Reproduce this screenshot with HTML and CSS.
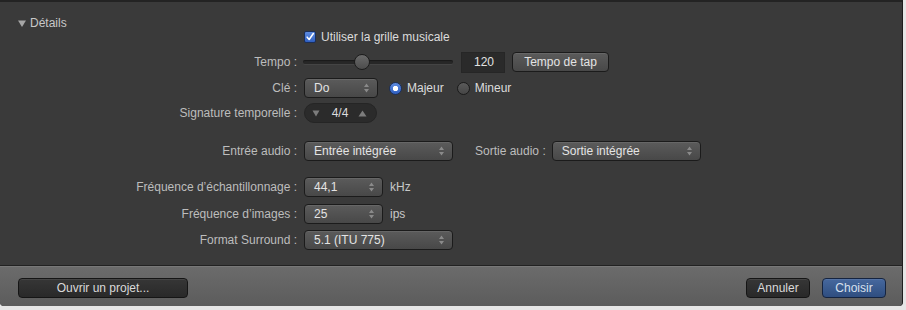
FILE: index.html
```html
<!DOCTYPE html>
<html lang="fr">
<head>
<meta charset="utf-8">
<title>Détails</title>
<link rel="stylesheet" href="styles.css">
</head>
<body>
<div class="window">
  <div class="content">
    <div class="disclosure"><svg class="tri" width="8" height="7" viewBox="0 0 8 7"><path d="M0 0.5 L8 0.5 L4 7 Z" fill="#a6a6a6"/></svg>Détails</div>

    <div class="row row-check">
      <span class="lbl"></span>
      <span class="checkbox"><svg width="12" height="12" viewBox="0 0 12 12"><path d="M2.6 6.2 L5 9 L10 1.8" fill="none" stroke="#fff" stroke-width="1.8" stroke-linecap="round" stroke-linejoin="round"/></svg></span>
      <span class="ctext">Utiliser la grille musicale</span>
    </div>

    <div class="row row-tempo">
      <span class="lbl">Tempo :</span>
      <span class="slider"><span class="track"></span><span class="knob"></span></span>
      <span class="numfield">120</span>
      <span class="button btn-tap">Tempo de tap</span>
    </div>

    <div class="row">
      <span class="lbl">Clé :</span>
      <span class="popup w74">Do<svg class="arr" width="7" height="10" viewBox="0 0 7 10"><path d="M3.5 0.5 L6 4 L1 4 Z M3.5 9.5 L6 6 L1 6 Z" fill="#8a8a8a"/></svg></span>
      <span class="radio on"></span><span class="ctext rl">Majeur</span>
      <span class="radio off"></span><span class="ctext rl">Mineur</span>
    </div>

    <div class="row row-sig">
      <span class="lbl">Signature temporelle :</span>
      <span class="stepper">
        <svg width="8" height="7" viewBox="0 0 8 7"><path d="M0.5 0.5 L7.5 0.5 L4 6.5 Z" fill="#7c7c7c"/></svg>
        <span class="stext">4/4</span>
        <svg width="9" height="7" viewBox="0 0 9 7"><path d="M0.5 6.5 L8.5 6.5 L4.5 0.5 Z" fill="#7c7c7c"/></svg>
      </span>
    </div>

    <div class="row row-audio">
      <span class="lbl">Entrée audio :</span>
      <span class="popup w149">Entrée intégrée<svg class="arr" width="7" height="10" viewBox="0 0 7 10"><path d="M3.5 0.5 L6 4 L1 4 Z M3.5 9.5 L6 6 L1 6 Z" fill="#8a8a8a"/></svg></span>
      <span class="lbl2">Sortie audio :</span>
      <span class="popup w149">Sortie intégrée<svg class="arr" width="7" height="10" viewBox="0 0 7 10"><path d="M3.5 0.5 L6 4 L1 4 Z M3.5 9.5 L6 6 L1 6 Z" fill="#8a8a8a"/></svg></span>
    </div>

    <div class="row row-freq">
      <span class="lbl">Fréquence d’échantillonnage :</span>
      <span class="popup w79">44,1<svg class="arr" width="7" height="10" viewBox="0 0 7 10"><path d="M3.5 0.5 L6 4 L1 4 Z M3.5 9.5 L6 6 L1 6 Z" fill="#8a8a8a"/></svg></span>
      <span class="unit">kHz</span>
    </div>

    <div class="row row-img">
      <span class="lbl">Fréquence d’images :</span>
      <span class="popup w79">25<svg class="arr" width="7" height="10" viewBox="0 0 7 10"><path d="M3.5 0.5 L6 4 L1 4 Z M3.5 9.5 L6 6 L1 6 Z" fill="#8a8a8a"/></svg></span>
      <span class="unit">ips</span>
    </div>

    <div class="row">
      <span class="lbl">Format Surround :</span>
      <span class="popup w149">5.1 (ITU 775)<svg class="arr" width="7" height="10" viewBox="0 0 7 10"><path d="M3.5 0.5 L6 4 L1 4 Z M3.5 9.5 L6 6 L1 6 Z" fill="#8a8a8a"/></svg></span>
    </div>
  </div>

  <div class="footer">
    <span class="fbtn btn-open">Ouvrir un projet...</span>
    <span class="spacer"></span>
    <span class="fbtn btn-cancel">Annuler</span>
    <span class="fbtn btn-ok">Choisir</span>
  </div>
</div>
</body>
</html>
```

FILE: styles.css
```css
* { box-sizing: border-box; }
html, body {
  margin: 0;
  padding: 0;
  background: #e6e6e6;
  width: 906px;
  height: 310px;
  overflow: hidden;
}
body {
  font-family: "Liberation Sans", Arial, sans-serif;
  font-size: 12px;
  color: #c4c4c4;
}
.window {
  width: 903px;
  height: 306px;
  display: flex;
  flex-direction: column;
  background: #3a3a3a;
  border-top: 2px solid #232323;
  border-right: 1px solid #1e1e1e;
  border-bottom-left-radius: 4px;
  border-bottom-right-radius: 4px;
  overflow: hidden;
}
.content {
  height: 264px;
  border-bottom: 1px solid #222;
  display: flex;
  flex-direction: column;
}
.disclosure {
  margin-top: 14px;
  padding-left: 18px;
  height: 14px;
  line-height: 14px;
  color: #c8c8c8;
  display: flex;
  align-items: center;
}
.tri {
  margin-right: 4px;
}
.row {
  display: flex;
  align-items: center;
  height: 26px;
  flex-shrink: 0;
}
.row-check { height: 14px; }
.row-tempo { margin-top: 5px; }
.row-sig { height: 24px; }
.row-audio { margin-top: 13px; }
.row-freq { margin-top: 10px; }
.row-img { height: 27px; }
.lbl {
  width: 304px;
  padding-right: 7px;
  text-align: right;
  color: #bdbdbd;
  white-space: nowrap;
}
.ctext { color: #dcdcdc; }
.checkbox {
  width: 12px;
  height: 12px;
  border-radius: 2px;
  background: linear-gradient(#5d8be0, #2f5fc0);
  border: 1px solid #1b2f5a;
  display: flex;
  align-items: center;
  justify-content: center;
  margin-right: 5px;
}
.checkbox svg { margin-top: -1px; }
.slider {
  position: relative;
  width: 150px;
  height: 18px;
  margin-left: -1px;
  display: flex;
  align-items: center;
}
.track {
  width: 100%;
  height: 4px;
  border-radius: 2px;
  background: #272727;
  box-shadow: inset 0 1px 1px #1a1a1a, 0 1px 0 #444;
}
.knob {
  position: absolute;
  left: 51px;
  top: 1px;
  width: 16px;
  height: 16px;
  border-radius: 50%;
  background: linear-gradient(#6a6a6a, #4c4c4c);
  border: 1px solid #1c1c1c;
}
.numfield {
  margin-left: 8px;
  width: 44px;
  height: 21px;
  background: #2a2a2a;
  border: 1px solid #262626;
  color: #e2e2e2;
  text-align: right;
  padding-right: 10px;
  line-height: 19px;
}
.button, .popup {
  height: 20px;
  border-radius: 4px;
  border: 1px solid #1b1b1b;
  background: linear-gradient(#5b5b5b, #484848);
  color: #e4e4e4;
  line-height: 18px;
  box-shadow: inset 0 1px 0 rgba(255,255,255,0.08);
}
.btn-tap {
  margin-left: 7px;
  width: 97px;
  text-align: center;
}
.popup {
  position: relative;
  padding-left: 9px;
  display: flex;
  align-items: center;
}
.arr {
  position: absolute;
  right: 7px;
  top: 4px;
}
.w74 { width: 74px; }
.w79 { width: 79px; }
.w149 { width: 149px; }
.radio {
  width: 13px;
  height: 13px;
  border-radius: 50%;
  border: 1px solid #1a1a1a;
  flex-shrink: 0;
}
.radio.on {
  margin-left: 11px;
  background: radial-gradient(circle, #fff 0, #fff 2.4px, transparent 3px), linear-gradient(#5d8be0, #2f5fc0);
  border-color: #1b2f5a;
}
.radio.off {
  margin-left: 13px;
  background: linear-gradient(#5a5a5a, #464646);
}
.rl { margin-left: 5px; }
.stepper {
  width: 73px;
  height: 20px;
  border-radius: 10px;
  background: #2b2b2b;
  border: 1px solid #252525;
  display: flex;
  align-items: center;
  justify-content: space-between;
  padding: 0 9px 0 7px;
}
.stext { color: #dcdcdc; margin-left: 2px; }
.lbl2 {
  margin-left: 22px;
  margin-right: 6px;
  color: #bdbdbd;
}
.unit {
  margin-left: 7px;
  color: #c8c8c8;
}
.footer {
  flex: 1;
  display: flex;
  align-items: center;
  padding: 2px 16px 0 18px;
  background: linear-gradient(#6b6b6b, #5c5c5c);
  border-top: 1px solid #787878;
}
.spacer { flex: 1; }
.fbtn {
  height: 20px;
  border-radius: 4px;
  border: 1px solid #151515;
  background: linear-gradient(#363636, #292929);
  color: #dadada;
  text-align: center;
  line-height: 18px;
  box-shadow: inset 0 1px 0 rgba(255,255,255,0.08);
}
.btn-open { width: 170px; }
.btn-cancel { width: 64px; }
.btn-ok {
  width: 64px;
  margin-left: 12px;
  background: linear-gradient(#46689e, #2f4e80);
  border-color: #152440;
  color: #d8e0ee;
}
```
